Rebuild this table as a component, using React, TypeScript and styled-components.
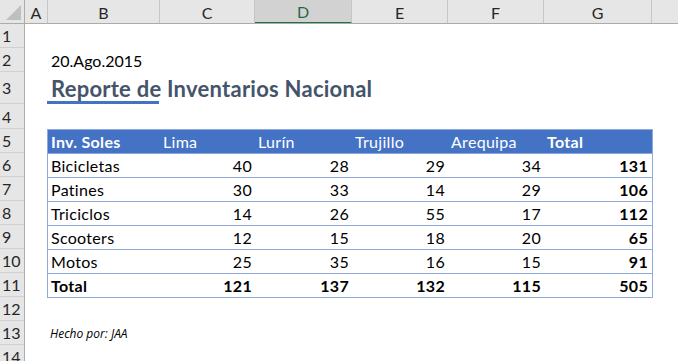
import React from 'react'
import styled, { createGlobalStyle } from 'styled-components'

const GlobalStyle = createGlobalStyle`
  body {
    margin: 0;
    background: #ffffff;
    overflow: hidden;
    font-family: Lato, "Liberation Sans", sans-serif;
  }
`

const COLUMNS = [
  { name: 'A', width: 23 },
  { name: 'B', width: 112 },
  { name: 'C', width: 95 },
  { name: 'D', width: 97 },
  { name: 'E', width: 96 },
  { name: 'F', width: 96 },
  { name: 'G', width: 108 },
  { name: '', width: 60 },
]

const ROW_HEIGHTS = [24, 24, 32, 25, 24, 24, 24, 24, 24, 24, 24, 24, 24, 24]

const TABLE_COLS = '112px 95px 97px 96px 96px 107px'

const Sheet = styled.div`
  width: 678px;
  height: 361px;
  overflow: hidden;
  display: grid;
  grid-template-columns: 25px 1fr;
  grid-template-rows: 24px 1fr;
  background: #ffffff;
`

const Corner = styled.div`
  position: relative;
  background: #e6e6e6;
  border-right: 1px solid #ababab;
  border-bottom: 1px solid #ababab;
  box-sizing: border-box;

  &::after {
    content: '';
    position: absolute;
    right: 3px;
    bottom: 3px;
    width: 0;
    height: 0;
    border-left: 15px solid transparent;
    border-bottom: 15px solid #bfbfbf;
  }
`

const ColHeaders = styled.div`
  display: flex;
  background: #e6e6e6;
  border-bottom: 1px solid #ababab;
  box-sizing: border-box;
  overflow: hidden;
`

const ColHead = styled.div<{ $w: number; $active?: boolean }>`
  flex: 0 0 ${(p) => p.$w}px;
  box-sizing: border-box;
  display: flex;
  align-items: center;
  justify-content: center;
  font-size: 16px;
  color: ${(p) => (p.$active ? '#1e6b41' : '#262626')};
  background: ${(p) => (p.$active ? '#d2d2d2' : 'transparent')};
  border-right: 1px solid #c6c6c6;
  border-bottom: ${(p) => (p.$active ? '2px solid #217346' : 'none')};
  margin-bottom: ${(p) => (p.$active ? '-1px' : '0')};
  padding-top: 1px;
`

const RowHeaders = styled.div`
  display: flex;
  flex-direction: column;
  background: #e6e6e6;
  border-right: 1px solid #ababab;
  box-sizing: border-box;
`

const RowHead = styled.div<{ $h: number }>`
  flex: 0 0 ${(p) => p.$h}px;
  box-sizing: border-box;
  border-bottom: 1px solid #d0d0d0;
  padding-left: 2px;
  display: flex;
  align-items: center;
  font-size: 16px;
  color: #262626;
`

const Body = styled.div`
  display: flex;
  flex-direction: column;
  color: #000000;
`

const SheetRow = styled.div<{ $h: number }>`
  display: flex;
  align-items: flex-end;
  height: ${(p) => p.$h}px;
  flex: 0 0 auto;
`

const Indent = styled.div`
  flex: 0 0 23px;
`

const DateCell = styled.div`
  font-size: 16px;
  line-height: 23px;
  padding-left: 3px;
  white-space: nowrap;
`

const TitleCell = styled.div`
  width: 112px;
  height: 100%;
  box-sizing: border-box;
  border-bottom: 3px solid #4472c4;
  margin-left: -1px;
  padding-left: 4px;
  display: flex;
  align-items: flex-end;
  white-space: nowrap;
  font-size: 22px;
  letter-spacing: 0.25px;
  font-weight: 700;
  color: #44546a;
  line-height: 24px;
`

const Table = styled.div`
  margin-left: 22px;
  width: 604px;
  border: 1px solid #8ea9db;
  border-bottom: none;
  flex: 0 0 auto;
`

const TableRow = styled.div<{ $head?: boolean }>`
  display: grid;
  grid-template-columns: ${TABLE_COLS};
  height: 24px;
  box-sizing: border-box;
  border-bottom: 1px solid #8ea9db;
  background: ${(p) => (p.$head ? '#4472c4' : '#ffffff')};
  color: ${(p) => (p.$head ? '#ffffff' : '#000000')};
`

const Cell = styled.div<{ $num?: boolean; $bold?: boolean }>`
  padding: 0 3px;
  font-size: 16px;
  letter-spacing: 0.3px;
  line-height: 23px;
  text-align: ${(p) => (p.$num ? 'right' : 'left')};
  font-weight: ${(p) => (p.$bold ? 700 : 400)};
  white-space: nowrap;
`

const Note = styled.div`
  font-family: "Open Sans", Lato, sans-serif;
  font-size: 12px;
  font-style: italic;
  line-height: 24px;
  padding-left: 2px;
  white-space: nowrap;
`

const headers = ['Inv. Soles', 'Lima', 'Lurín', 'Trujillo', 'Arequipa', 'Total']

const products: [string, number[]][] = [
  ['Bicicletas', [40, 28, 29, 34]],
  ['Patines', [30, 33, 14, 29]],
  ['Triciclos', [14, 26, 55, 17]],
  ['Scooters', [12, 15, 18, 20]],
  ['Motos', [25, 35, 16, 15]],
]

const sum = (list: number[]) => list.reduce((a, b) => a + b, 0)

const App: React.FC = () => {
  const colTotals = [0, 1, 2, 3].map((i) => sum(products.map(([, v]) => v[i])))

  return (
    <>
      <GlobalStyle />
      <Sheet>
        <Corner />
        <ColHeaders>
          {COLUMNS.map((c, i) => (
            <ColHead key={i} $w={c.width} $active={c.name === 'D'}>
              {c.name}
            </ColHead>
          ))}
        </ColHeaders>
        <RowHeaders>
          {ROW_HEIGHTS.map((h, i) => (
            <RowHead key={i} $h={h}>
              {i + 1}
            </RowHead>
          ))}
        </RowHeaders>
        <Body>
          <SheetRow $h={24} />
          <SheetRow $h={24}>
            <Indent />
            <DateCell>20.Ago.2015</DateCell>
          </SheetRow>
          <SheetRow $h={32}>
            <Indent />
            <TitleCell>Reporte de Inventarios Nacional</TitleCell>
          </SheetRow>
          <SheetRow $h={25} />
          <Table>
            <TableRow $head>
              {headers.map((h, i) => (
                <Cell key={h} $bold={i === 0 || i === 5}>
                  {h}
                </Cell>
              ))}
            </TableRow>
            {products.map(([name, values]) => (
              <TableRow key={name}>
                <Cell>{name}</Cell>
                {values.map((v, i) => (
                  <Cell key={i} $num>
                    {v}
                  </Cell>
                ))}
                <Cell $num $bold>
                  {sum(values)}
                </Cell>
              </TableRow>
            ))}
            <TableRow>
              <Cell $bold>Total</Cell>
              {colTotals.map((v, i) => (
                <Cell key={i} $num $bold>
                  {v}
                </Cell>
              ))}
              <Cell $num $bold>
                {sum(colTotals)}
              </Cell>
            </TableRow>
          </Table>
          <SheetRow $h={24} />
          <SheetRow $h={24}>
            <Indent />
            <Note>Hecho por: JAA</Note>
          </SheetRow>
        </Body>
      </Sheet>
    </>
  )
}

export default App
